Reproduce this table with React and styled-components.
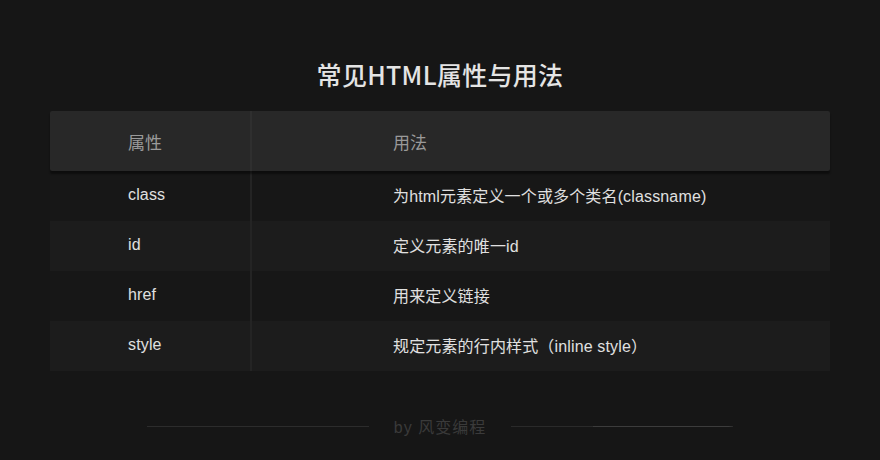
import React from "react";
import styled, { createGlobalStyle } from "styled-components";

const GlobalStyle = createGlobalStyle`
  html, body {
    margin: 0;
    padding: 0;
    background: #161616;
  }
  body {
    font-family: "Liberation Sans", "Noto Sans CJK SC", sans-serif;
  }
`;

const Page = styled.div`
  width: 880px;
  height: 460px;
  background: #161616;
  display: flex;
  flex-direction: column;
  align-items: center;
  overflow: hidden;
`;

const Title = styled.h1`
  margin: 58px 0 0;
  height: 32px;
  line-height: 32px;
  font-family: "Noto Sans CJK SC", "Liberation Sans", sans-serif;
  font-size: 25px;
  font-weight: 500;
  color: #e4e4e4;
  letter-spacing: 0.3px;
`;

const Table = styled.div`
  margin-top: 21px;
  width: 780px;
  display: flex;
  flex-direction: column;
`;

const Header = styled.div`
  display: grid;
  grid-template-columns: 200px 1fr;
  height: 60px;
  background: #282828;
  border-radius: 2px;
  box-shadow: 0 3px 2px rgba(0, 0, 0, 0.45);
  position: relative;
  z-index: 1;
`;

const Row = styled.div`
  display: grid;
  grid-template-columns: 200px 1fr;
  height: 50px;
  background: ${(p) => (p.$alt ? "#1c1c1c" : "#171717")};
`;

const Cell = styled.div`
  display: flex;
  align-items: center;
  padding-left: ${(p) => (p.$first ? "78px" : "141px")};
  border-left: ${(p) => (p.$first ? "none" : "2px solid #242424")};
  font-size: ${(p) => (p.$head ? "17px" : "16px")};
  color: ${(p) => (p.$head ? "#9a9a9a" : "#e0e0e0")};
  padding-bottom: ${(p) => (p.$head ? "0" : "2px")};
  letter-spacing: ${(p) => (p.$head ? "0" : "0.15px")};
`;

const HeadCell = styled(Cell)`
  border-left-color: #2f2f2f;
`;

const Footer = styled.div`
  margin-top: 43px;
  display: flex;
  align-items: center;
  gap: 25px;
`;

const Line = styled.div`
  width: 222px;
  height: 1px;
  background: ${(p) =>
    p.$glow
      ? "linear-gradient(to right, #2a2a2a 0 37%, #3c3c3c 37% 98%, #2a2a2a 100%)"
      : "#2c2c2c"};
`;

const Credit = styled.span`
  font-size: 16px;
  color: #3a3a3a;
  letter-spacing: 1px;
`;

const rows = [
  ["class", "为html元素定义一个或多个类名(classname)"],
  ["id", "定义元素的唯一id"],
  ["href", "用来定义链接"],
  ["style", "规定元素的行内样式（inline style）"],
];

const App = () => {
  return (
    <Page>
      <GlobalStyle />
      <Title>常见HTML属性与用法</Title>
      <Table>
        <Header>
          <HeadCell $first $head>属性</HeadCell>
          <HeadCell $head>用法</HeadCell>
        </Header>
        {rows.map(([name, usage], i) => (
          <Row key={name} $alt={i % 2 === 1}>
            <Cell $first>{name}</Cell>
            <Cell>{usage}</Cell>
          </Row>
        ))}
      </Table>
      <Footer>
        <Line />
        <Credit>by 风变编程</Credit>
        <Line $glow />
      </Footer>
    </Page>
  );
};

export default App;
